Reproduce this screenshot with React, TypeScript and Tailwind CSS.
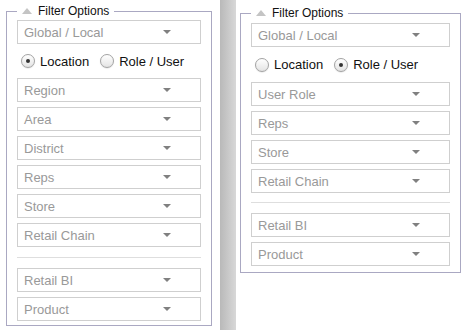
import React from 'react'

interface PanelProps {
  width: string
  top: string
  contentTop: string
  radioRowH: string
  sepTop: string
  bottomPad: string
  roleSelected: boolean
  selects: string[]
  extras: string[]
}

function Caret() {
  return (
    <svg width="8" height="4" viewBox="0 0 8 4" className="shrink-0">
      <path d="M0 0 L8 0 L4 4 Z" fill="#808080" />
    </svg>
  )
}

function SelectBox({ label }: { label: string }) {
  return (
    <div className="flex h-[24px] items-center justify-between border border-[#cfcfcf] bg-white pl-[6px] pr-[29px] text-[13px] leading-none text-[#999]">
      <span>{label}</span>
      <Caret />
    </div>
  )
}

function Radio({ checked, label }: { checked: boolean; label: string }) {
  return (
    <div className="flex items-center gap-[5px]">
      <div className="flex h-[14px] w-[14px] items-center justify-center rounded-full border border-[#a3a3a3] bg-linear-to-b from-white to-[#e4e4e4] shadow-[0_0.5px_1px_rgba(0,0,0,0.15)]">
        {checked && <div className="h-[4px] w-[4px] rounded-full bg-[#333]"></div>}
      </div>
      <span className="text-[13px] leading-none text-[#111]">{label}</span>
    </div>
  )
}

function FilterPanel(props: PanelProps) {
  return (
    <fieldset className={`${props.width} ${props.top} ${props.bottomPad} border border-[#aaa8c2] px-[10px]`}>
      <legend className="px-[5px]">
        <div className="flex h-[16px] items-center gap-[6px] text-[12px] leading-[16px] text-[#111]">
          <svg width="10" height="6" viewBox="0 0 10 6">
            <path d="M0 6 L5 0 L10 6 Z" fill="#c4c4c4" />
          </svg>
          <span>Filter Options</span>
        </div>
      </legend>

      <div className={props.contentTop}>
        <SelectBox label="Global / Local" />
      </div>

      <div className={`flex ${props.radioRowH} items-center pl-[4px]`}>
        <Radio checked={!props.roleSelected} label="Location" />
        <div className="ml-[11px]">
          <Radio checked={props.roleSelected} label="Role / User" />
        </div>
      </div>

      <div className="flex flex-col gap-[5px]">
        {props.selects.map(s => (
          <SelectBox key={s} label={s} />
        ))}
      </div>

      <div className={`${props.sepTop} mb-[10px] h-px bg-[#dedede]`}></div>

      <div className="flex flex-col gap-[5px]">
        {props.extras.map(s => (
          <SelectBox key={s} label={s} />
        ))}
      </div>
    </fieldset>
  )
}

export default function App() {
  return (
    <div className="flex h-[330px] w-[463px] items-start overflow-hidden bg-white font-['Liberation_Sans',Arial,sans-serif]">
      <div className="pl-[6px]">
        <FilterPanel
          width="w-[206px]"
          top="mt-[3px]"
          contentTop="mt-[1px]"
          radioRowH="h-[34px]"
          sepTop="mt-[10px]"
          bottomPad="pb-[4px]"
          roleSelected={false}
          selects={['Region', 'Area', 'District', 'Reps', 'Store', 'Retail Chain']}
          extras={['Retail BI', 'Product']}
        />
      </div>

      {/* divider between the two states */}
      <div className="ml-[8px] h-[330px] w-[16px] bg-linear-to-r from-[#b9b9b9] to-[#d8d8d8]"></div>

      <div className="ml-[4px]">
        <FilterPanel
          width="w-[221px]"
          top="mt-[5px]"
          contentTop="mt-[2px]"
          radioRowH="h-[35px]"
          sepTop="mt-[9px]"
          bottomPad="pb-[6px]"
          roleSelected={true}
          selects={['User Role', 'Reps', 'Store', 'Retail Chain']}
          extras={['Retail BI', 'Product']}
        />
      </div>
    </div>
  )
}
